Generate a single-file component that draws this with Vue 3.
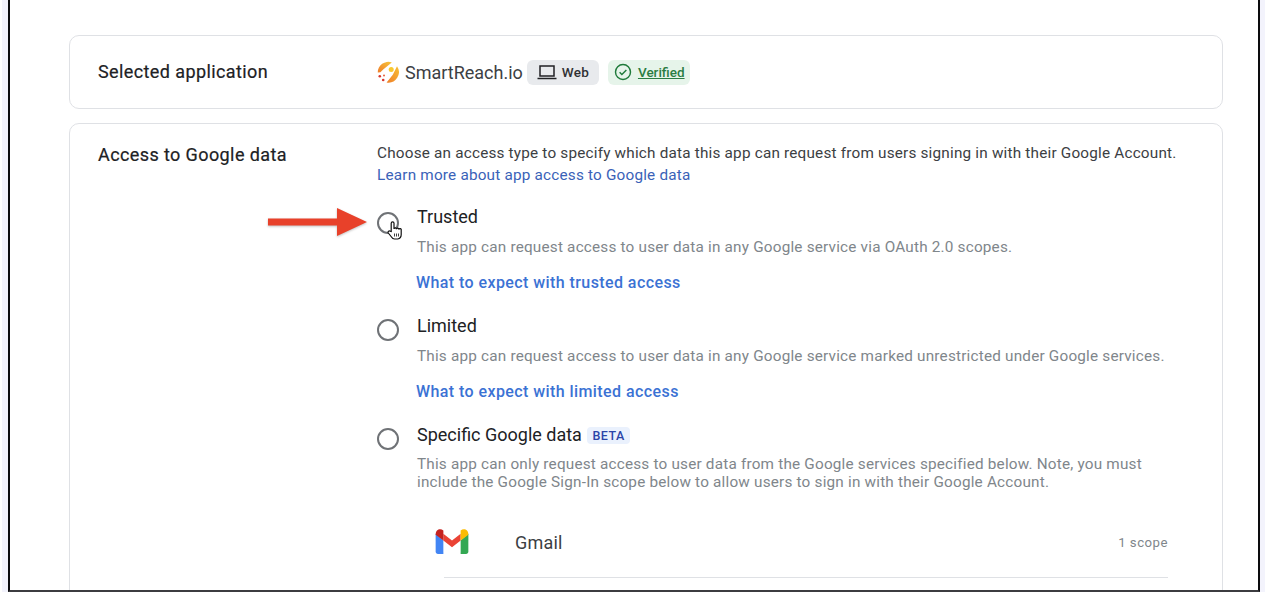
<template>
  <div class="page">
    <div class="frame">
      <section class="card first">
        <h2 class="label">Selected application</h2>
        <div class="app">
          <svg class="logo" viewBox="0 0 22 22" width="22" height="22">
            <defs>
              <linearGradient id="lgA" x1="0" y1="1" x2="1" y2="0">
                <stop offset="0" stop-color="#ee7d2a"/>
                <stop offset="1" stop-color="#f8c53a"/>
              </linearGradient>
              <linearGradient id="lgB" x1="1" y1="0" x2="0" y2="1">
                <stop offset="0" stop-color="#f8bf35"/>
                <stop offset="1" stop-color="#ef7e2a"/>
              </linearGradient>
            </defs>
            <path d="M.8 11.500A10.500 10.500 0 0 1 14.800 1.400L6.200 8.600 3.400 11.200Z" fill="url(#lgA)"/>
            <path d="M20 5.200A10.500 10.500 0 0 1 9.600 21.500L15.800 13.800Z" fill="url(#lgB)"/>
            <circle cx="14.200" cy="8.400" r="2.500" fill="#f8c92f"/>
            <circle cx="2.800" cy="15.200" r="1.300" fill="#d8362a"/>
            <circle cx="6.200" cy="19" r="1.300" fill="#d8362a"/>
            <circle cx="7" cy="14.500" r="1" fill="#e8603a"/>
          </svg>
          <span class="app-name">SmartReach.io</span>
          <span class="chip web">
            <svg viewBox="0 0 20 16" width="20" height="16"><path d="M3 2h14v10H3z" fill="none" stroke="#202124" stroke-width="1.500"/><path d="M.5 14.500h19" stroke="#202124" stroke-width="1.500"/></svg>
            Web
          </span>
          <span class="chip verified">
            <svg viewBox="0 0 24 24" width="18" height="18"><circle cx="12" cy="12" r="10" fill="none" stroke="#1e7a3a" stroke-width="1.900"/><path d="M7.500 12.400l3 3 6-6" fill="none" stroke="#1e7a3a" stroke-width="1.900"/></svg>
            <u>Verified</u>
          </span>
        </div>
      </section>

      <section class="card second">
        <h2 class="label">Access to Google data</h2>
        <div class="content">
          <p class="intro">Choose an access type to specify which data this app can request from users signing in with their Google Account.</p>
          <a class="intro-link">Learn more about app access to Google data</a>

          <div class="option trusted">
            <span class="radio">
              <svg class="cursor" viewBox="0 0 16 19" width="16" height="19">
                <path d="M4.200 10.500V2.200a1.400 1.400 0 0 1 2.800 0V8a1.200 1.200 0 0 1 2.400.2 1.200 1.200 0 0 1 2.400.3 1.200 1.200 0 0 1 2.400.6v4.400c0 2.500-1.200 4-3.500 4.500H7.500c-1.500 0-2.300-.8-3-2L1.300 12c-.9-1.500.9-2.800 2-1.800Z" fill="#fff" stroke="#111" stroke-width="1.200"/>
                <path d="M7.500 12.500v3M9.500 12.500v3M11.500 12.500v3" stroke="#111" stroke-width=".8"/>
              </svg>
            </span>
            <div>
              <div class="title">Trusted</div>
              <p class="desc">This app can request access to user data in any Google service via OAuth 2.0 scopes.</p>
              <a class="more">What to expect with trusted access</a>
            </div>
            <svg class="arrow" viewBox="0 0 100 28" width="100" height="28">
              <path d="M0 10.500h69V0l30 14-30 14V17.500H0Z" fill="#e8412a"/>
            </svg>
          </div>

          <div class="option">
            <span class="radio"></span>
            <div>
              <div class="title">Limited</div>
              <p class="desc">This app can request access to user data in any Google service marked unrestricted under Google services.</p>
              <a class="more">What to expect with limited access</a>
            </div>
          </div>

          <div class="option">
            <span class="radio"></span>
            <div>
              <div class="title">Specific Google data <span class="beta">BETA</span></div>
              <p class="desc tight">This app can only request access to user data from the Google services specified below. Note, you must include the Google Sign-In scope below to allow users to sign in with their Google Account.</p>
            </div>
          </div>

          <div class="service">
            <svg class="gmail" viewBox="0 0 34 26" width="34" height="25">
              <path d="M0 5v18.500C0 24.900 1 26 2.400 26H8V12Z" fill="#4285f4"/>
              <path d="M26 12v14h5.600c1.400 0 2.400-1.100 2.400-2.500V5Z" fill="#34a853"/>
              <path d="M8 12v-7l9 7 9-7v7l-9 7Z" fill="#ea4335"/>
              <path d="M0 5.500C0 1 4.500-1.300 8 1.500V12L0 6Z" fill="#c5221f"/>
              <path d="M26 1.500C29.500-1.300 34 1 34 5.500V6l-8 6Z" fill="#fbbc04"/>
            </svg>
            <span class="service-name">Gmail</span>
            <span class="scope">1 scope</span>
          </div>
        </div>
      </section>
    </div>
  </div>
</template>

<script setup>
</script>

<style>
html, body { margin: 0; background: #fff; overflow: hidden; }
</style>

<style scoped>
.page {
  width: 1274px;
  height: 592px;
  padding: 0 14px 0 8px;
  box-sizing: border-box;
  background: #fff;
  font-family: Roboto, "Liberation Sans", sans-serif;
  color: #202124;
}
.frame {
  height: 592px;
  box-sizing: border-box;
  background: #fff;
  border: 2px solid #0c0c0e;
  border-top: 0;
  border-bottom-color: #3c3c40;
  padding: 35px 35px 0 59px;
  overflow: hidden;
  box-shadow: -6px 0 0 #f3f3fc, 5px 0 0 #f3f3fc;
}
.card {
  border: 1px solid #dfe1e5;
  border-radius: 10px;
  display: flex;
  padding-left: 28px;
  box-sizing: border-box;
}
.first { height: 74px; align-items: center; margin-bottom: 14px; }
.second { padding-top: 19px; height: 500px; }
.label {
  width: 279px;
  flex: none;
  margin: 0;
  font-size: 18px;
  letter-spacing: .4px;
  font-weight: 400;
  color: #202124;
  -webkit-text-stroke: 0.2px #202124;
}
.first .label { margin-bottom: 2px; }
.second .label { margin-top: 1px; line-height: 22px; }
.app { display: flex; align-items: center; }
.logo { margin-right: 6px; }
.app-name { font-size: 18px; color: #3c4043; margin-right: 4px; }
.chip {
  display: inline-flex;
  align-items: center;
  height: 25px;
  border-radius: 6px;
  font-size: 13.500px;
  font-weight: 500;
  box-sizing: border-box;
}
.web { background: #e8eaed; color: #303134; padding: 0 10px; gap: 5px; margin-right: 9px; letter-spacing: .2px; }
.verified { background: #e6f4ea; color: #2a7d44; padding: 0 5px 0 6px; gap: 6px; }
.content { flex: 1; }
.intro { margin: 0; font-size: 15.300px; letter-spacing: .2px; line-height: 20px; color: #3c4043; }
.intro-link { display: block; font-size: 15.300px; letter-spacing: .2px; line-height: 24px; color: #3a62b8; }
.option { display: flex; position: relative; margin-top: 22px; }
.trusted { margin-top: 19px; }
.radio {
  width: 22px;
  height: 22px;
  flex: none;
  border: 2px solid #6f7276;
  border-radius: 50%;
  box-sizing: border-box;
  margin: 4px 18px 0 0;
  position: relative;
}
.trusted .radio { margin-top: 6px; }
.cursor { position: absolute; left: 8px; top: 7px; }
.arrow {
  position: absolute;
  left: -109px;
  top: 2px;
  filter: drop-shadow(0 1px 1px rgba(0, 0, 0, .25));
}
.title { font-size: 18px; line-height: 22px; color: #202124; }
.desc { margin: 9px 0 0; max-width: 760px; font-size: 15.300px; letter-spacing: .2px; line-height: 20px; color: #80868b; }
.desc.tight { line-height: 18px; margin-top: 9px; }
.more { display: block; margin-top: 16px; margin-left: -1px; font-size: 16px; letter-spacing: .42px; font-weight: 500; line-height: 20px; color: #3b72d4; }
.beta {
  display: inline-block;
  margin-left: 1px;
  padding: 0 5px;
  font-size: 12.500px;
  font-weight: 500;
  line-height: 17px;
  border-radius: 4px;
  color: #2a44a8;
  background: #eaf1fd;
  letter-spacing: .5px;
  vertical-align: 1px;
}
.service {
  display: flex;
  align-items: center;
  margin: 16px 54px 0 67px;
  height: 70px;
  position: relative;
  border-bottom: 1px solid #dfe1e5;
}
.gmail { position: absolute; left: -9px; top: 22px; }
.service-name { margin-left: 71px; font-size: 18px; letter-spacing: .2px; color: #3c4043; }
.scope { margin-left: auto; font-size: 13.200px; letter-spacing: .5px; color: #80868b; }
</style>
